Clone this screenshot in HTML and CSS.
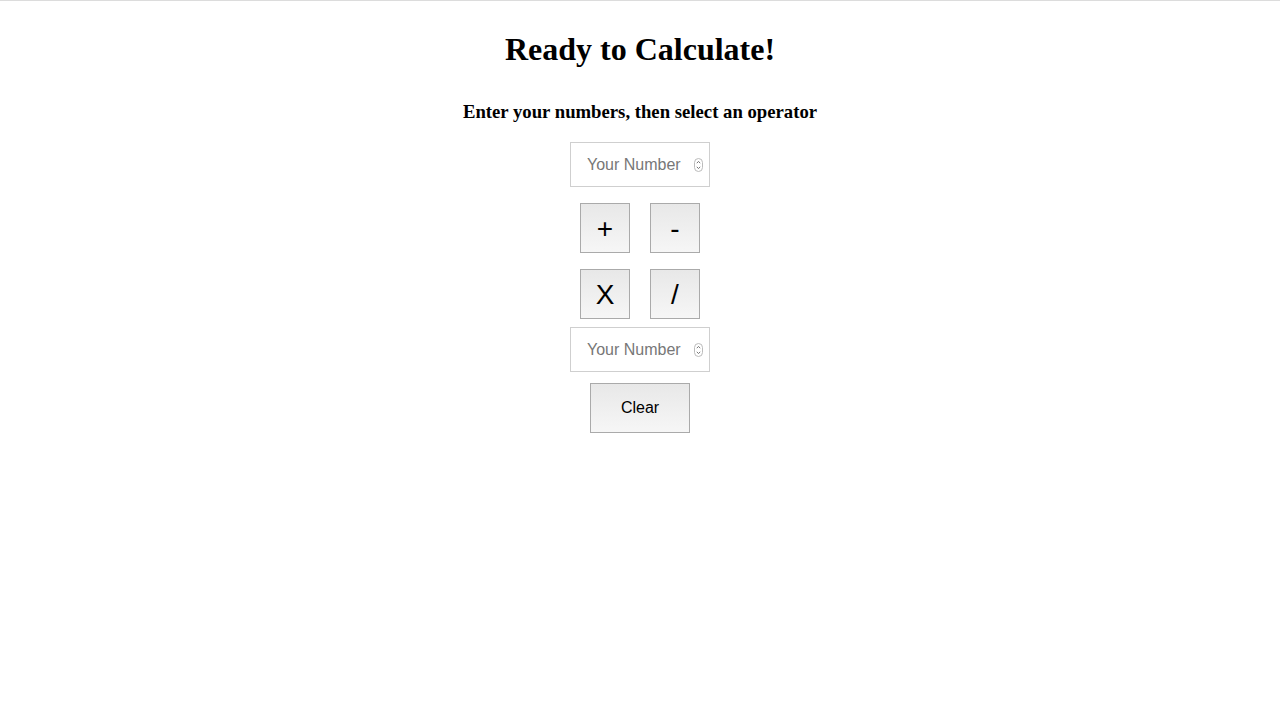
FILE: index.html
```html
<!DOCTYPE html>
<html lang="en">
<head>
<meta charset="utf-8">
<title>Calculator</title>
<link rel="stylesheet" href="styles.css">
</head>
<body>
<main class="calc">
  <h1 class="title">Ready to Calculate!</h1>
  <h3 class="subtitle">Enter your numbers, then select an operator</h3>
  <div class="num-field">
    <input class="num-input" type="text" placeholder="Your Number">
    <svg class="spinner" width="9" height="14" viewBox="0 0 9 14" aria-hidden="true">
      <rect x="0.5" y="0.5" width="8" height="13" rx="4" fill="#fff" stroke="#bbb"/>
      <path d="M2.8 5.2 L4.5 3.4 L6.2 5.2" fill="none" stroke="#777" stroke-width="1"/>
      <path d="M2.8 8.8 L4.5 10.6 L6.2 8.8" fill="none" stroke="#777" stroke-width="1"/>
    </svg>
  </div>
  <div class="ops">
    <div class="op-row">
      <button class="btn op">+</button>
      <button class="btn op">-</button>
    </div>
    <div class="op-row">
      <button class="btn op">X</button>
      <button class="btn op">/</button>
    </div>
  </div>
  <div class="num-field second">
    <input class="num-input" type="text" placeholder="Your Number">
    <svg class="spinner" width="9" height="14" viewBox="0 0 9 14" aria-hidden="true">
      <rect x="0.5" y="0.5" width="8" height="13" rx="4" fill="#fff" stroke="#bbb"/>
      <path d="M2.8 5.2 L4.5 3.4 L6.2 5.2" fill="none" stroke="#777" stroke-width="1"/>
      <path d="M2.8 8.8 L4.5 10.6 L6.2 8.8" fill="none" stroke="#777" stroke-width="1"/>
    </svg>
  </div>
  <button class="btn clear">Clear</button>
</main>
</body>
</html>
```
FILE: styles.css
```css
html, body {
  margin: 0;
  padding: 0;
  background: #fff;
}
body {
  border-top: 1px solid #dcdcdc;
  font-family: "Liberation Serif", "Times New Roman", serif;
  color: #000;
}
.calc {
  display: flex;
  flex-direction: column;
  align-items: center;
}
.title {
  margin: 30px 0 0;
  font-size: 32px;
  line-height: 36px;
  font-weight: bold;
}
.subtitle {
  margin: 34px 0 0;
  font-size: 18.72px;
  line-height: 22px;
  font-weight: bold;
}
.num-field {
  margin-top: 19px;
  box-sizing: border-box;
  width: 140px;
  height: 45px;
  border: 1px solid #cfcfcf;
  background: #fff;
  display: flex;
  align-items: center;
  padding: 1px 6px 0 16px;
}
.num-field.second {
  margin-top: 8px;
}
.num-input {
  flex: 1;
  min-width: 0;
  border: 0;
  outline: none;
  padding: 0;
  margin: 0;
  background: transparent;
  font-family: "Liberation Sans", Arial, sans-serif;
  font-size: 16px;
  color: #000;
}
.num-input::placeholder {
  color: #777;
}
.spinner {
  flex: none;
  display: block;
}
.ops {
  margin-top: 16px;
  display: flex;
  flex-direction: column;
  gap: 16px;
}
.op-row {
  display: flex;
  gap: 20px;
}
.btn {
  box-sizing: border-box;
  border: 1px solid #aaa;
  background: linear-gradient(to bottom, #e8e8e8, #f6f6f6);
  font-family: "Liberation Sans", Arial, sans-serif;
  color: #000;
  padding: 0;
  margin: 0;
  border-radius: 0;
}
.op {
  width: 50px;
  height: 50px;
  font-size: 28px;
  line-height: 1;
  padding-top: 2px;
}
.clear {
  margin-top: 11px;
  width: 100px;
  height: 50px;
  font-size: 16px;
}
```
